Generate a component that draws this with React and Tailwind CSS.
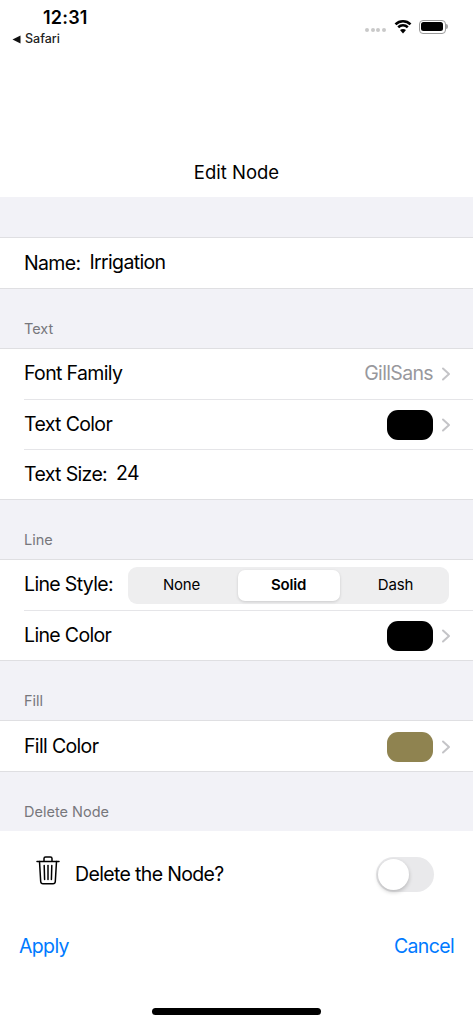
import React from 'react';

function Chevron() {
  return (
    <svg width="10" height="16" viewBox="0 0 10 16" fill="none" className="ml-[8px]">
      <path d="M2 2.5L8 8L2 13.5" stroke="#c4c4c7" strokeWidth="2" strokeLinecap="round" strokeLinejoin="round" />
    </svg>
  );
}

function Swatch({ color }) {
  return <div className={`w-[46px] h-[30px] rounded-[11px] ${color}`} />;
}

function SectionHeader({ title }) {
  return (
    <div className="h-[59px] bg-[#f2f2f7] flex items-end pl-[24px] pb-[10px] text-[14.5px] leading-[18px] tracking-normal text-[#77777c]">
      {title}
    </div>
  );
}

function Group({ children }) {
  return <div className="border-y border-[#dfdfe2] bg-white">{children}</div>;
}

function FirstRow({ label, children }) {
  return (
    <div className="ml-[24px] h-[51px] flex items-center pr-[22px] border-b border-[#e5e5e8]">
      <span>{label}</span>
      {children}
    </div>
  );
}

function MiddleRow({ label, children }) {
  return (
    <div className="ml-[24px] h-[50px] flex items-center pr-[22px] border-b border-[#e5e5e8]">
      <span>{label}</span>
      {children}
    </div>
  );
}

function LastRow({ label, children, height = 'h-[50px]' }) {
  return (
    <div className={`ml-[24px] ${height} flex items-center pr-[22px] pt-[1px]`}>
      <span>{label}</span>
      {children}
    </div>
  );
}

function StatusBar() {
  return (
    <div className="h-[60px] relative tracking-normal">
      <div className="pt-[6px] pl-[43px] text-[18px] leading-[24px] font-semibold tracking-[0.2px]">12:31</div>
      <div className="pl-[12px] pt-[1px] flex items-center text-[12.5px] leading-[16px] font-medium text-[#222]">
        <svg width="9" height="9" viewBox="0 0 9 9" className="mr-[4px]">
          <path d="M0.5 4.5L8.5 0.5V8.5Z" fill="#111" />
        </svg>
        Safari
      </div>
      <div className="absolute top-[19px] left-[365px] flex items-center">
        <div className="flex gap-[1.5px] mt-[7px] mr-[8px]">
          <div className="w-[4px] h-[4px] rounded-full bg-[#c9c9c9]" />
          <div className="w-[4px] h-[4px] rounded-full bg-[#c9c9c9]" />
          <div className="w-[4px] h-[4px] rounded-full bg-[#c9c9c9]" />
          <div className="w-[4px] h-[4px] rounded-full bg-[#c9c9c9]" />
        </div>
        <svg width="18" height="15" viewBox="0 0 18 15" className="mr-[7px]">
          <path d="M9 2.2C12 2.2 14.6 3.4 16.5 5.3" stroke="#000" strokeWidth="2.6" fill="none" />
          <path d="M9 2.2C6 2.2 3.4 3.4 1.5 5.3" stroke="#000" strokeWidth="2.6" fill="none" />
          <path d="M4.2 8.2C5.5 7 7.2 6.3 9 6.3C10.8 6.3 12.5 7 13.8 8.2" stroke="#000" strokeWidth="2.6" fill="none" />
          <path d="M6 11C6.9 10.4 7.9 10 9 10C10.1 10 11.1 10.4 12 11L9 14.5Z" fill="#000" />
        </svg>
        <div className="flex items-center">
          <div className="w-[27px] h-[14px] rounded-[4px] border border-[#9a9a9a] p-[1.5px]">
            <div className="w-full h-full rounded-[2.5px] bg-black" />
          </div>
          <div className="w-[1.5px] h-[5px] ml-[0.5px] rounded-r-full bg-[#a5a5a5]" />
        </div>
      </div>
    </div>
  );
}

function TrashIcon() {
  return (
    <svg width="24" height="29" viewBox="0 0 24 29" fill="none" stroke="#000" strokeWidth="1.5" strokeLinecap="round" strokeLinejoin="round" className="-mt-[7px]">
      <path d="M1 5.5H23" />
      <path d="M8 5V2.6C8 1.7 8.7 1 9.6 1H14.4C15.3 1 16 1.7 16 2.6V5" />
      <path d="M3.5 5.5L4.7 25.5C4.8 27 5.8 27.8 7 27.8H17C18.2 27.8 19.2 27 19.3 25.5L20.5 5.5" />
      <path d="M8.2 9.5L8.6 23.5" />
      <path d="M12 9.5V23.5" />
      <path d="M15.8 9.5L15.4 23.5" />
    </svg>
  );
}

export default function App() {
  return (
    <div className="w-[473px] h-[1024px] bg-white flex flex-col overflow-hidden text-black text-[19.5px] tracking-[-0.65px] font-['Inter',sans-serif]">
      <StatusBar />
      <div className="h-[137px] flex items-end justify-center pb-[13px] text-[18.5px] leading-[24px] tracking-normal">Edit Node</div>
      <div className="h-[40px] bg-[#f2f2f7]" />

      <Group>
        <LastRow label="Name:">
          <span className="ml-[9px] -mt-[2px]">Irrigation</span>
        </LastRow>
      </Group>

      <SectionHeader title="Text" />
      <Group>
        <FirstRow label="Font Family">
          <span className="ml-auto text-[#98989d]">GillSans</span>
          <Chevron />
        </FirstRow>
        <MiddleRow label="Text Color">
          <div className="ml-auto" />
          <Swatch color="bg-black" />
          <Chevron />
        </MiddleRow>
        <LastRow label="Text Size:" height="h-[49px]">
          <span className="ml-[9px] -mt-[2px]">24</span>
        </LastRow>
      </Group>

      <SectionHeader title="Line" />
      <Group>
        <FirstRow label="Line Style:">
          <div className="ml-[15px] mr-[2px] flex-1 h-[37px] rounded-[9px] bg-[#eeeeef] grid grid-cols-3 items-center text-[15px] tracking-[-0.2px]">
            <div className="text-center">None</div>
            <div className="mx-[2.5px] h-[31px] rounded-[7px] bg-white shadow-[0_1px_3px_rgba(0,0,0,0.15)] flex items-center justify-center font-semibold">Solid</div>
            <div className="text-center">Dash</div>
          </div>
        </FirstRow>
        <LastRow label="Line Color" height="h-[49px]">
          <div className="ml-auto" />
          <Swatch color="bg-black" />
          <Chevron />
        </LastRow>
      </Group>

      <SectionHeader title="Fill" />
      <Group>
        <LastRow label="Fill Color">
          <div className="ml-auto" />
          <Swatch color="bg-[#8f8350]" />
          <Chevron />
        </LastRow>
      </Group>

      <SectionHeader title="Delete Node" />

      <div className="flex items-center h-[86px] pl-[36px] pr-[39px]">
        <TrashIcon />
        <span className="ml-[15px] mt-[2px]">Delete the Node?</span>
        <div className="ml-auto w-[58px] h-[35px] rounded-full bg-[#e9e9eb] p-[2px]">
          <div className="w-[31px] h-[31px] rounded-full bg-white shadow-[0_2px_4px_rgba(0,0,0,0.22)]" />
        </div>
      </div>

      <div className="flex justify-between px-[19px] pt-[15px] text-[#007aff] leading-[28px]">
        <span>Apply</span>
        <span>Cancel</span>
      </div>

      <div className="mt-auto mb-[9px] mx-auto w-[169px] h-[7px] rounded-full bg-black" />
    </div>
  );
}
